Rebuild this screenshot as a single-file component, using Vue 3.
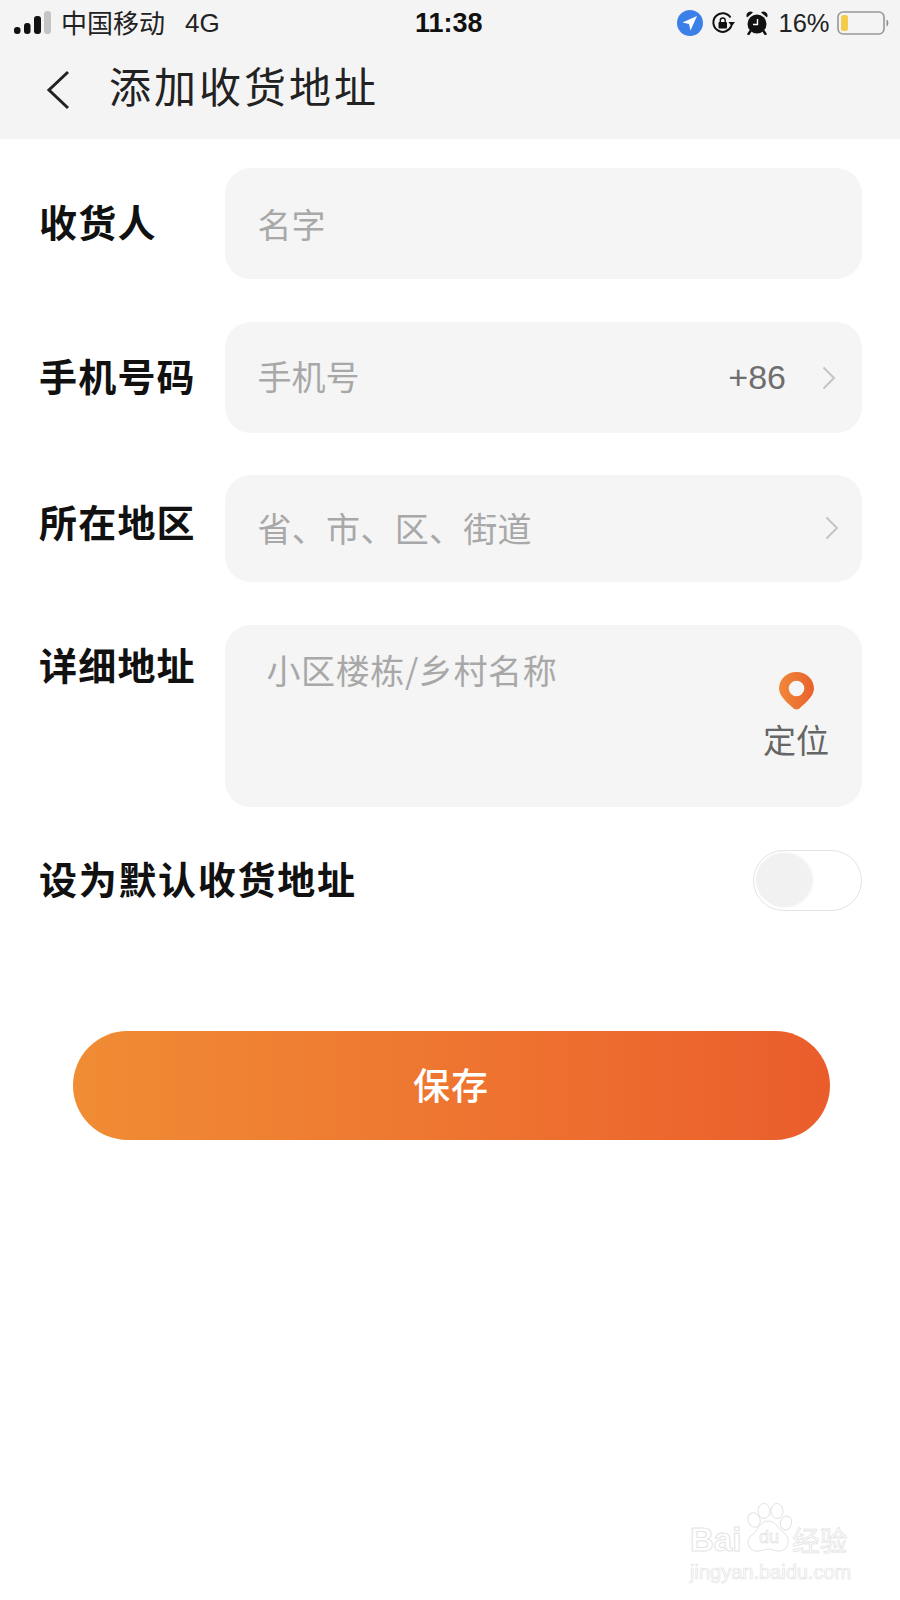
<template>
  <div class="page">
    <!-- top grey area -->
    <header class="top">
      <div class="status">
        <div class="status-left">
          <svg class="signal" width="38" height="24" viewBox="0 0 38 24">
            <rect x="1" y="16" width="6.5" height="7" rx="3" fill="#111" />
            <rect x="11" y="12" width="6.5" height="11" rx="3" fill="#111" />
            <rect x="21" y="5" width="7" height="18" rx="3" fill="#111" />
            <rect x="31" y="0" width="7" height="23" rx="3" fill="#c4c4c4" />
          </svg>
          <span class="carrier">中国移动</span>
          <span class="net">4G</span>
        </div>
        <div class="time">11:38</div>
        <div class="status-right">
          <svg class="ic-loc" width="26" height="26" viewBox="0 0 26 26">
            <circle cx="13" cy="13" r="13" fill="#3b7fe8" />
            <path d="M20 6 L5.5 12.5 L12 14 L13.5 20.5 Z" fill="#fff" />
          </svg>
          <svg class="ic-lock" width="24" height="24" viewBox="0 0 24 24">
            <path d="M20.5 14.5 A9.3 9.3 0 1 1 19.5 6.5" fill="none" stroke="#111" stroke-width="2" />
            <path d="M17.5 11 L24 11 L20.7 15.5 Z" fill="#111" />
            <rect x="7.5" y="11" width="8.5" height="6.5" rx="1" fill="#111" />
            <path d="M9.3 11 V9.5 a2.4 2.4 0 0 1 4.9 0 V11" fill="none" stroke="#111" stroke-width="1.4" />
          </svg>
          <svg class="ic-alarm" width="22" height="24" viewBox="0 0 22 24">
            <circle cx="11" cy="13" r="9.5" fill="#111" />
            <path d="M1 6.5 A4 4 0 0 1 7 1.5 Z M21 6.5 A4 4 0 0 0 15 1.5 Z" fill="#111" />
            <path d="M4.5 20 L2.5 23 M17.5 20 L19.5 23" stroke="#111" stroke-width="2.4" stroke-linecap="round" />
            <path d="M11.5 8 V13.5 H7" fill="none" stroke="#fff" stroke-width="1.4" />
          </svg>
          <span class="percent">16%</span>
          <svg class="battery" width="53" height="24" viewBox="0 0 53 24">
            <rect x="1" y="1" width="46" height="22" rx="5" fill="none" stroke="#989898" stroke-width="1.6" />
            <rect x="4" y="4" width="7" height="16" rx="2.5" fill="#f6ca4a" />
            <path d="M49.5 8.5 C52 9.5 52 14.5 49.5 15.5 Z" fill="#8e8e8e" />
          </svg>
        </div>
      </div>
      <div class="nav">
        <svg class="back" width="24" height="40" viewBox="0 0 24 40">
          <path d="M22 2 L3 20 L22 38" fill="none" stroke="#222" stroke-width="3" />
        </svg>
        <h1 class="title">添加收货地址</h1>
      </div>
    </header>

    <main class="form">
      <div class="row">
        <label class="label">收货人</label>
        <div class="field field-name"><span class="ph">名字</span></div>
      </div>
      <div class="row row-phone">
        <label class="label">手机号码</label>
        <div class="field field-phone">
          <span class="ph">手机号</span>
          <span class="code">+86</span>
          <svg class="chev" width="14" height="24" viewBox="0 0 14 24">
            <path d="M1.5 1.5 L12 12 L1.5 22.5" fill="none" stroke="#c4c4c4" stroke-width="2" />
          </svg>
        </div>
      </div>
      <div class="row row-area">
        <label class="label">所在地区</label>
        <div class="field field-area">
          <span class="ph">省、市、区、街道</span>
          <svg class="chev" width="14" height="24" viewBox="0 0 14 24">
            <path d="M1.5 1.5 L12 12 L1.5 22.5" fill="none" stroke="#c4c4c4" stroke-width="2" />
          </svg>
        </div>
      </div>
      <div class="row row-detail">
        <label class="label">详细地址</label>
        <div class="field field-detail">
          <span class="ph">小区楼栋/乡村名称</span>
          <div class="locate">
            <svg width="35" height="38" viewBox="0 0 36 39">
              <defs>
                <linearGradient id="pin" x1="0" y1="0" x2="1" y2="0">
                  <stop offset="0" stop-color="#f0883a" />
                  <stop offset="1" stop-color="#e9612c" />
                </linearGradient>
              </defs>
              <path d="M18 0 C8 0 0 7.5 0 17 C0 25 9 32 14.5 37 C16.5 39 19.5 39 21.5 37 C27 32 36 25 36 17 C36 7.5 28 0 18 0 Z" fill="url(#pin)" />
              <circle cx="18" cy="17" r="8" fill="#f5f5f5" />
            </svg>
            <span>定位</span>
          </div>
        </div>
      </div>
      <div class="row-default">
        <span class="label label-wide">设为默认收货地址</span>
        <div class="switch"><div class="knob"></div></div>
      </div>
      <button class="save">保存</button>
    </main>

    <div class="mark">
      <div class="mark-top">
        <span class="mark-bai">Bai</span>
        <svg class="mark-paw" width="46" height="50" viewBox="0 0 46 50">
          <g fill="#fff" stroke="#e2e2e2" stroke-width="1">
            <ellipse cx="8" cy="17" rx="6" ry="7.5" transform="rotate(-20 8 17)" />
            <ellipse cx="18" cy="8" rx="6" ry="7.5" />
            <ellipse cx="31" cy="8" rx="6" ry="7.5" />
            <ellipse cx="40" cy="20" rx="5.5" ry="7" transform="rotate(15 40 20)" />
            <path d="M22 18 C30 18 32 26 38 30 C45 35 43 48 33 48 C28 48 26 46 22 46 C18 46 15 49 9 48 C1 46 0 36 6 32 C12 28 14 18 22 18 Z" />
          </g>
          <text x="23" y="40" text-anchor="middle" class="mark-du">du</text>
        </svg>
        <span class="mark-cn">经验</span>
      </div>
      <div class="mark-url">jingyan.baidu.com</div>
    </div>
  </div>
</template>

<script setup>
</script>

<style>
html, body { background: #fff; }
</style>

<style scoped>
.page {
  position: relative;
  width: 900px;
  height: 1600px;
  overflow: hidden;
  background: #fff;
  font-family: "Noto Sans CJK SC", "Liberation Sans", sans-serif;
  color: #111;
}

.top { height: 139px; background: #f4f4f4; }

.status {
  height: 46px;
  display: flex;
  align-items: center;
  justify-content: space-between;
  padding: 0 10.5px 0 13px;
  position: relative;
}
.status-left { display: flex; align-items: center; }
.carrier { margin-left: 10px; font-size: 26px; color: #222; line-height: 30px; margin-top: -3px; }
.net { margin-left: 20px; font-family: "Liberation Sans", sans-serif; font-size: 26px; color: #222; }
.time {
  position: absolute;
  left: 415px;
  top: 6px;
  font-family: "Liberation Sans", sans-serif;
  font-weight: 700;
  font-size: 27px;
  line-height: 34px;
}
.status-right { display: flex; align-items: center; }
.ic-lock { margin-left: 8px; }
.ic-alarm { margin-left: 11px; }
.percent { font-family: "Liberation Sans", sans-serif; font-size: 25.5px; color: #222; margin: 0 7px 0 10px; }

.nav { height: 93px; display: flex; align-items: center; padding: 0 0 6px 46px; box-sizing: border-box; }
.back { flex: none; }
.title {
  margin: -10px 0 0 39px;
  font-size: 42px;
  font-weight: 400;
  letter-spacing: 3px;
  color: #222;
  line-height: 60px;
}

.form { padding: 29px 38px 0 39px; }
.row { display: flex; align-items: center; margin-bottom: 43px; }
.row-phone { margin-bottom: 41.5px; }
.row-area { margin-bottom: 43.5px; }
.row-detail { align-items: flex-start; margin-bottom: 43.5px; }
.label {
  width: 185.5px;
  flex: none;
  font-size: 38px;
  font-weight: 700;
  letter-spacing: 1.2px;
  line-height: 50px;
  color: #111;
  margin-bottom: 6px;
}
.row-area .label { margin-top: -10px; margin-bottom: 4px; }
.row-detail .label { margin-top: 14px; margin-bottom: 0; }
.label-wide { width: auto; letter-spacing: 1.7px; }

.field {
  flex: 1;
  background: #f5f5f5;
  border-radius: 26px;
  display: flex;
  align-items: center;
  padding: 0 26px 0 33px;
  box-sizing: border-box;
}
.field-name, .field-phone { height: 111px; }
.field-area { height: 107px; padding-right: 23.5px; }
.field-detail {
  height: 181.5px;
  align-items: flex-start;
  padding: 20px 33px 0 42px;
  justify-content: space-between;
}
.ph {
  font-size: 34px;
  color: #a8a8a8;
  line-height: 50px;
  white-space: nowrap;
  flex: 1;
  margin-bottom: 4px;
}
.field-name .ph { margin-bottom: 0; }
.field-area .ph { letter-spacing: 0.3px; margin-bottom: 0; }
.field-detail .ph { letter-spacing: 0.6px; }
.code {
  font-family: "Liberation Sans", sans-serif;
  font-size: 34px;
  color: #6e6e6e;
  margin-right: 36px;
}
.chev { flex: none; }

.locate {
  flex: none;
  display: flex;
  flex-direction: column;
  align-items: center;
  padding-top: 27px;
  font-size: 33px;
  line-height: 44px;
  color: #666;
}
.locate span { margin-top: 7px; }

.row-default {
  display: flex;
  align-items: center;
  justify-content: space-between;
  height: 61px;
}
.switch {
  width: 109px;
  height: 61px;
  box-sizing: border-box;
  border: 1.5px solid #e3e3e3;
  border-radius: 31px;
  padding: 2px;
  background: #fff;
}
.knob {
  width: 56px;
  height: 54px;
  border-radius: 50%;
  background: #f1f1f1;
  box-shadow: 1px 0 3px rgba(0, 0, 0, 0.06);
}

.save {
  display: block;
  width: 757px;
  height: 109px;
  margin: 120px 0 0 33.5px;
  padding: 0 0 3px;
  border: 0;
  border-radius: 55px;
  background: linear-gradient(90deg, #f08c34 0%, #ed6c2f 70%, #ea5d2b 100%);
  color: #fff;
  font-family: inherit;
  font-size: 37px;
  font-weight: 500;
  letter-spacing: 1px;
}

/* watermark */
.mark {
  position: absolute;
  left: 690px;
  top: 1503px;
  width: 170px;
  color: #fff;
  font-family: "Liberation Sans", sans-serif;
}
.mark-top { display: flex; align-items: flex-start; height: 54px; white-space: nowrap; }
.mark-bai {
  font-size: 33px;
  font-weight: 700;
  line-height: 30px;
  margin-top: 22px;
  -webkit-text-stroke: 1px #e4e4e4;
}
.mark-paw { margin-left: 5px; flex: none; }
.mark-du {
  font-family: "Liberation Sans", sans-serif;
  font-size: 18px;
  fill: #fff;
  stroke: #e2e2e2;
  stroke-width: 0.7;
}
.mark-cn {
  font-family: "Noto Sans CJK SC", sans-serif;
  font-size: 27.5px;
  line-height: 30px;
  margin-top: 21px;
  -webkit-text-stroke: 0.8px #e4e4e4;
}
.mark-url {
  font-size: 20px;
  line-height: 24px;
  margin-top: 3px;
  white-space: nowrap;
  -webkit-text-stroke: 0.7px #e4e4e4;
}
</style>
